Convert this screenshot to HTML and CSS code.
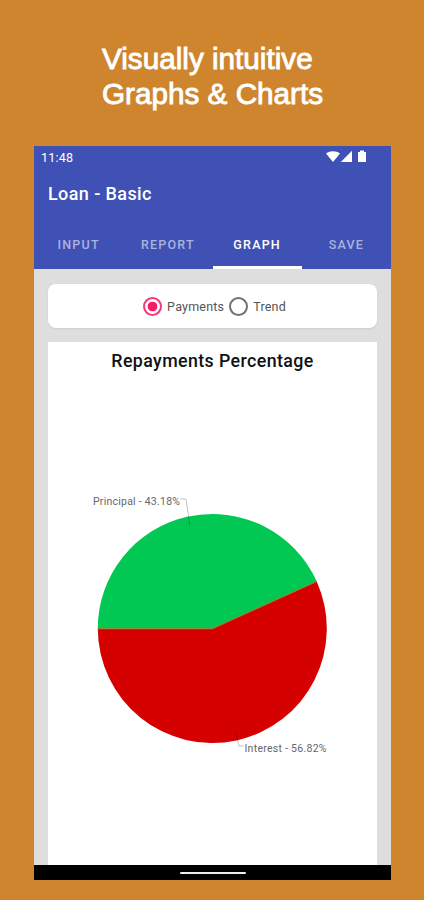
FILE: index.html
```html
<!DOCTYPE html>
<html lang="en">
<head>
    <meta charset="UTF-8">
    <meta name="viewport" content="width=device-width, initial-scale=1.0">
    <title>Loan - Basic</title>
    <link rel="stylesheet" href="styles.css">
</head>
<body>
    <h1 class="promo">Visually intuitive<br>Graphs &amp; Charts</h1>

    <div class="phone">
        <!-- App header -->
        <header class="header">
            <div class="status-bar">
                <span class="clock">11:48</span>
                <svg class="status-icons" width="42" height="14" viewBox="0 0 42 14">
                    <path d="M0 3.6C4 0.4 10 0.4 14 3.6L7 12Z"/>
                    <path d="M14.8 12L26 0.8V12Z"/>
                    <path d="M32 2H34V0.6H38V2H40V12H32Z"/>
                </svg>
            </div>
            <div class="app-title">Loan - Basic</div>
            <nav class="tabs">
                <a class="tab">INPUT</a>
                <a class="tab">REPORT</a>
                <a class="tab tab-active">GRAPH</a>
                <a class="tab">SAVE</a>
            </nav>
        </header>

        <main class="content">
            <!-- Chart type -->
            <div class="card options">
                <span class="radio radio-on"></span>
                <span class="option-label label-payments">Payments</span>
                <span class="radio"></span>
                <span class="option-label">Trend</span>
            </div>

            <!-- Pie chart -->
            <div class="chart">
                <h2 class="chart-title">Repayments Percentage</h2>
                <svg class="pie" width="329" height="300" viewBox="0 0 329 300">
                    <path d="M164.3 148.8L49.8 148.8A114.5 114.5 0 1 0 268.7 101.5Z" fill="#d50000"/>
                    <path d="M164.3 148.8L49.8 148.8A114.5 114.5 0 0 1 268.7 101.5Z" fill="#00c853"/>
                    <path d="M49.8 148.8H164.3L268.7 101.5" fill="none" stroke="#a87520" stroke-width="1"/>
                    <path d="M132 19H138L142 46" class="leader"/>
                    <path d="M187 251L191 266H196" class="leader"/>
                    <text x="45" y="25" textLength="87" class="slice-label">Principal - 43.18%</text>
                    <text x="196.5" y="272" textLength="82" class="slice-label">Interest - 56.82%</text>
                </svg>
            </div>
        </main>

        <div class="nav-bar"><span class="nav-handle"></span></div>
    </div>
</body>
</html>
```

FILE: styles.css
```css
* { margin: 0; padding: 0; box-sizing: border-box; }
body {
    height: 900px;
    padding-top: 41px;
    background: #ce852e;
    font-family: Roboto, sans-serif;
    overflow: hidden;
}

.promo {
    height: 105px;
    margin-left: 102px;
    color: white;
    font-family: "Liberation Sans", Arial, sans-serif;
    font-size: 29.7px;
    font-weight: 400;
    line-height: 35px;
    -webkit-text-stroke: 0.9px white;
}

.phone {
    display: flex;
    flex-direction: column;
    width: 357px;
    height: 734px;
    margin-left: 34px;
    background: #dedede;
}

.header { height: 123px; background: #3f51b5; color: white; }
.status-bar {
    display: flex;
    justify-content: space-between;
    align-items: center;
    height: 22px;
    padding: 0 23px 0 7px;
}
.clock { font-size: 12.5px; letter-spacing: 0.2px; }
.status-icons { fill: white; }
.app-title {
    height: 52px;
    padding-left: 14px;
    font-size: 18px;
    font-weight: 500;
    line-height: 52px;
    letter-spacing: 0.4px;
}
.tabs { display: grid; grid-template-columns: repeat(4, 1fr); height: 49px; }
.tab {
    height: 49px;
    border-bottom: 3px solid transparent;
    color: #aab3dd;
    font-size: 12.5px;
    font-weight: 500;
    line-height: 49px;
    letter-spacing: 1.2px;
    text-align: center;
}
.tab-active { border-color: white; color: white; }

.content {
    display: flex;
    flex: 1;
    flex-direction: column;
    gap: 14px;
    padding: 15px 14px 0;
}
.card { background: white; border-radius: 8px; box-shadow: 0 1px 2px rgba(0,0,0,0.08); }
.options {
    display: flex;
    align-items: center;
    justify-content: center;
    height: 44px;
    padding-left: 4px;
}
.radio {
    width: 19px;
    height: 19px;
    border: 2px solid #707070;
    border-radius: 50%;
}
.radio-on {
    border-color: #f5377a;
    background: radial-gradient(circle, #f51e68 4.5px, transparent 5.2px);
}
.option-label { margin-left: 5px; color: #555; font-size: 12.5px; letter-spacing: 0.2px; }
.label-payments { margin-right: 5px; }

.chart { flex: 1; background: white; }
.chart-title {
    height: 138px;
    color: #111;
    font-size: 17.8px;
    font-weight: 500;
    line-height: 38px;
    letter-spacing: 0.4px;
    text-align: center;
}
.pie { display: block; }
.leader { fill: none; stroke: #000; stroke-opacity: 0.3; stroke-width: 0.8; }
.slice-label { fill: #666; font-size: 10.5px; }

.nav-bar {
    display: flex;
    align-items: center;
    justify-content: center;
    height: 15px;
    background: black;
}
.nav-handle { width: 66px; height: 2px; border-radius: 1px; background: #eee; }
```
